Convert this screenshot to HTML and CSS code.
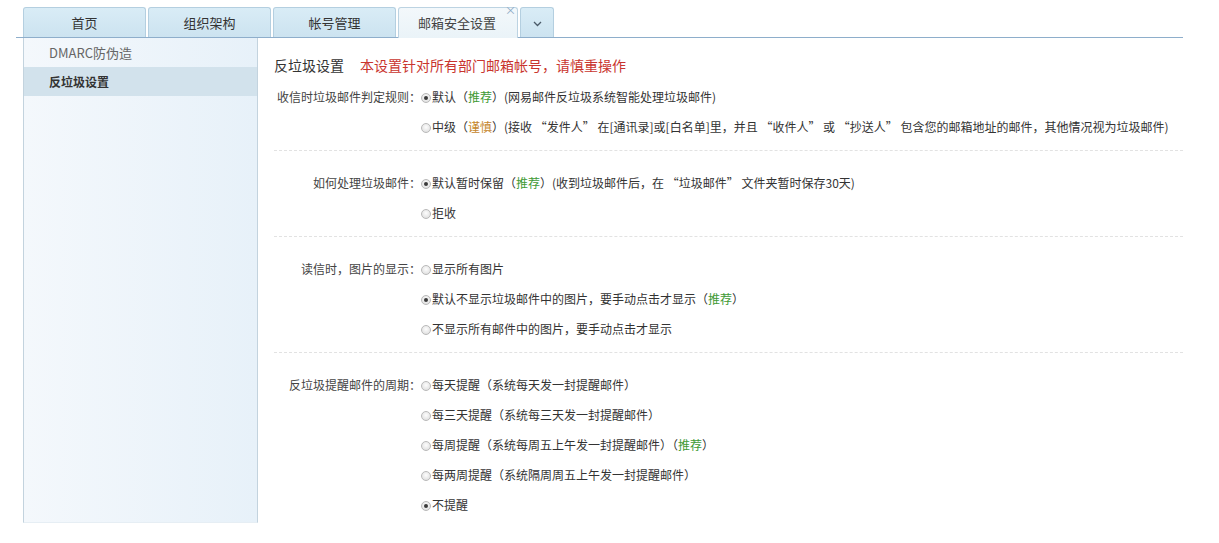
FILE: index.html
```html
<!DOCTYPE html>
<html lang="zh-CN">
<head>
<meta charset="utf-8">
<title>反垃圾设置</title>
<link rel="stylesheet" href="styles.css">
</head>
<body>
<div class="page">
  <div class="tabbar">
    <div class="tab">首页</div>
    <div class="tab">组织架构</div>
    <div class="tab">帐号管理</div>
    <div class="tab active">邮箱安全设置<span class="close">×</span></div>
    <div class="tab more"><svg width="9" height="6" viewBox="0 0 9 6"><polyline points="1,1 4.5,4.5 8,1" fill="none" stroke="#4a5a68" stroke-width="1.3"/></svg></div>
  </div>
  <div class="main">
    <aside class="sidebar">
      <div class="side-item">DMARC防伪造</div>
      <div class="side-item active">反垃圾设置</div>
    </aside>
    <section class="content">
      <div class="title">反垃圾设置<span class="warn">本设置针对所有部门邮箱帐号，请慎重操作</span></div>

      <div class="group first">
        <div class="row"><div class="label">收信时垃圾邮件判定规则：</div><div class="opt"><span class="radio checked"></span>默认（<span class="green">推荐</span>）(网易邮件反垃圾系统智能处理垃圾邮件)</div></div>
        <div class="row"><div class="label"></div><div class="opt"><span class="radio"></span>中级（<span class="orange">谨慎</span>）(接收 “发件人” 在[通讯录]或[白名单]里，并且 “收件人” 或 “抄送人” 包含您的邮箱地址的邮件，其他情况视为垃圾邮件)</div></div>
      </div>

      <div class="group">
        <div class="row"><div class="label">如何处理垃圾邮件：</div><div class="opt"><span class="radio checked"></span>默认暂时保留（<span class="green">推荐</span>）(收到垃圾邮件后，在 “垃圾邮件” 文件夹暂时保存30天)</div></div>
        <div class="row"><div class="label"></div><div class="opt"><span class="radio"></span>拒收</div></div>
      </div>

      <div class="group">
        <div class="row"><div class="label">读信时，图片的显示：</div><div class="opt"><span class="radio"></span>显示所有图片</div></div>
        <div class="row"><div class="label"></div><div class="opt"><span class="radio checked"></span>默认不显示垃圾邮件中的图片，要手动点击才显示（<span class="green">推荐</span>）</div></div>
        <div class="row"><div class="label"></div><div class="opt"><span class="radio"></span>不显示所有邮件中的图片，要手动点击才显示</div></div>
      </div>

      <div class="group last">
        <div class="row"><div class="label">反垃圾提醒邮件的周期：</div><div class="opt"><span class="radio"></span>每天提醒（系统每天发一封提醒邮件）</div></div>
        <div class="row"><div class="label"></div><div class="opt"><span class="radio"></span>每三天提醒（系统每三天发一封提醒邮件）</div></div>
        <div class="row"><div class="label"></div><div class="opt"><span class="radio"></span>每周提醒（系统每周五上午发一封提醒邮件）（<span class="green">推荐</span>）</div></div>
        <div class="row"><div class="label"></div><div class="opt"><span class="radio"></span>每两周提醒（系统隔周周五上午发一封提醒邮件）</div></div>
        <div class="row"><div class="label"></div><div class="opt"><span class="radio checked"></span>不提醒</div></div>
      </div>
    </section>
  </div>
</div>
</body>
</html>
```

FILE: styles.css
```css
* { box-sizing: border-box; }
html, body { margin: 0; padding: 0; background: #fff; }
body {
  font-family: "Noto Sans CJK SC", "Microsoft YaHei", "Liberation Sans", sans-serif;
  color: #333;
  font-size: 12px;
}
.page {
  width: 1167px;
  margin-left: 16px;
  padding-top: 7px;
}
.tabbar {
  display: flex;
  padding-left: 7px;
  border-bottom: 1px solid #8eaecb;
  height: 31px;
}
.tab {
  position: relative;
  width: 123px;
  height: 30px;
  margin-right: 2px;
  border: 1px solid #b4cfe0;
  border-bottom: none;
  border-radius: 3px 3px 0 0;
  background: linear-gradient(#d9ecf6, #cce3f0);
  font-size: 13px;
  line-height: 29px;
  text-align: center;
  color: #333;
}
.tab.active {
  width: 120px;
  height: 31px;
  background: linear-gradient(#f3f8fb, #eaf3f8);
  border-color: #bcd3e2;
  color: #444;
  padding-right: 2px;
}
.tab .close {
  position: absolute;
  top: -8px;
  right: 1px;
  font-size: 11px;
  color: #8aa8c4;
  line-height: 20px;
}
.tab.more {
  width: 34px;
  display: flex;
  align-items: center;
  justify-content: center;
  padding-top: 2px;
}
.main {
  display: flex;
  align-items: flex-start;
}
.sidebar {
  width: 235px;
  height: 485px;
  margin-left: 7px;
  border-left: 1px solid #c3d3de;
  border-right: 1px solid #c3d3de;
  border-bottom: 1px solid #e6eef4;
  background: linear-gradient(to right, #f4f8fc, #e7f1f9);
}
.side-item {
  height: 29px;
  line-height: 29px;
  padding-left: 25px;
  font-size: 13px;
  color: #666;
}
.side-item.active {
  background: #d2e2ec;
  color: #333;
  font-weight: bold;
  font-size: 12px;
}
.content {
  flex: 1;
  margin-left: 16px;
  padding-top: 17px;
}
.title {
  font-size: 14px;
  line-height: 20px;
  color: #333;
  margin-bottom: 7px;
}
.warn {
  color: #c9352e;
  margin-left: 16px;
}
.group {
  padding-top: 17px;
  padding-bottom: 8px;
  border-bottom: 1px dashed #e2e2e2;
}
.group.first { padding-top: 0; }
.group.last { border-bottom: none; }
.row {
  display: flex;
  height: 30px;
  line-height: 30px;
  font-size: 12px;
}
.label {
  width: 147px;
  flex: none;
  text-align: right;
  color: #444;
}
.opt {
  color: #333;
  white-space: nowrap;
}
.radio {
  position: relative;
  display: inline-block;
  width: 10px;
  height: 10px;
  margin-right: 1px;
  border: 1px solid #b9b9b9;
  border-radius: 50%;
  background: radial-gradient(circle at 50% 40%, #fdfdfd, #d9d9d9);
  vertical-align: -1px;
}
.radio.checked::after {
  content: "";
  position: absolute;
  left: 2px;
  top: 2px;
  width: 4px;
  height: 4px;
  border-radius: 50%;
  background: #3a3a3a;
}
.green { color: #3f9a35; }
.orange { color: #c5862c; }
```
